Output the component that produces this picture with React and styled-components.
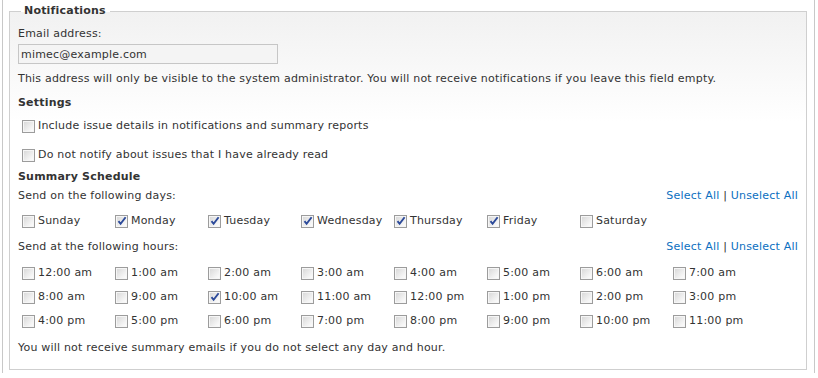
import React, {useState} from 'react';
import styled, {createGlobalStyle} from 'styled-components';

const Global = createGlobalStyle`
    html, body {
        margin: 0;
        padding: 0;
        background: #fff;
    }
    body {
        font-family: 'DejaVu Sans', Verdana, sans-serif;
        font-size: 11px;
        letter-spacing: 0.2px;
        color: #333;
    }
`

const Page = styled.div`
    width: 813px;
    height: 373px;
    margin-left: 2px;
    border-left: 1px solid #c8c8c8;
    border-right: 1px solid #c8c8c8;
    padding: 3px 7px 0 6px;
    box-sizing: border-box;
`

const Fieldset = styled.fieldset`
    margin: 0;
    padding: 0 8px 13px 8px;
    border: 1px solid #cfcfcf;
    background: linear-gradient(#f1f1f1, #ffffff 110px);
    min-width: 0;
`

const Legend = styled.legend`
    margin-left: 3px;
    padding: 0 4px 0 3px;
    font-weight: bold;
    line-height: 16px;
    color: #333;
`

const Line = styled.div`
    line-height: 16px;
    margin-top: ${props => props.$top || 0}px;
`

const Heading = styled(Line)`
    font-weight: bold;
`

const Input = styled.input`
    display: block;
    margin: 2px 0 0 0;
    width: 260px;
    height: 20px;
    padding: 0 2px;
    box-sizing: border-box;
    border: 1px solid #c6c6c6;
    background: #f4f4f4;
    font-family: inherit;
    font-size: 11px;
    letter-spacing: 0.2px;
    color: #333;
    outline: none;
`

const Bar = styled.div`
    display: flex;
    justify-content: space-between;
    line-height: 16px;
    margin-top: ${props => props.$top || 0}px;
`

const Links = styled.span`
    color: #333;
`

const Link = styled.a`
    color: #0b6fbf;
    text-decoration: none;
    cursor: pointer;
`

const Grid = styled.div`
    display: grid;
    grid-template-columns: repeat(${props => props.$cols}, 93px);
    row-gap: 8px;
    margin-top: ${props => props.$top || 0}px;
`

const Option = styled.label`
    display: flex;
    align-items: center;
    height: 16px;
    line-height: 16px;
    white-space: nowrap;
    margin-top: ${props => props.$top || 0}px;
    cursor: pointer;
`

const Box = styled.span`
    flex: none;
    position: relative;
    width: 13px;
    height: 13px;
    margin: 0 3px 0 4px;
    box-sizing: border-box;
    border: 1px solid #9c9c9c;
    background: linear-gradient(135deg, #d6d6d6, #f4f4f4 70%, #ffffff);
    box-shadow: inset 0 0 0 1px #f6f6f6;
    svg {
        position: absolute;
        left: 1px;
        top: 0px;
    }
`

const Check = ({checked, onClick}) => (
    <Box onClick={onClick}>
        {checked && (
            <svg width="10" height="10" viewBox="0 0 10 10">
                <path d="M1.5 5.2 L3.6 7.8 L8.6 1.2" fill="none" stroke="#2c4a9a" strokeWidth="1.9" />
            </svg>
        )}
    </Box>
)

const Toggle = ({label, checked, onToggle, top}) => (
    <Option $top={top} onClick={onToggle}>
        <Check checked={checked} />
        {label}
    </Option>
)

const days = ['Sunday', 'Monday', 'Tuesday', 'Wednesday', 'Thursday', 'Friday', 'Saturday'];
const hours = [];
for (let i = 0; i < 24; i++) {
    const h = i % 12 === 0 ? 12 : i % 12;
    hours.push(`${h}:00 ${i < 12 ? 'am' : 'pm'}`);
}

const App = () => {
    const [settings, setSettings] = useState([false, false]);
    const [daySel, setDaySel] = useState([false, true, true, true, true, true, false]);
    const [hourSel, setHourSel] = useState(hours.map((h, i) => i === 10));

    const flip = (list, set, i) => set(list.map((v, j) => j === i ? !v : v));

    return <>
        <Global />
        <Page>
            <Fieldset>
                <Legend>Notifications</Legend>
                <Line $top={7}>Email address:</Line>
                <Input defaultValue="mimec@example.com" />
                <Line $top={7}>This address will only be visible to the system administrator. You will not receive notifications if you leave this field empty.</Line>
                <Heading $top={8}>Settings</Heading>
                <Toggle top={7} label="Include issue details in notifications and summary reports"
                    checked={settings[0]} onToggle={() => flip(settings, setSettings, 0)} />
                <Toggle top={13} label="Do not notify about issues that I have already read"
                    checked={settings[1]} onToggle={() => flip(settings, setSettings, 1)} />
                <Heading $top={6}>Summary Schedule</Heading>
                <Bar $top={3}>
                    <span>Send on the following days:</span>
                    <Links>
                        <Link onClick={() => setDaySel(days.map(() => true))}>Select All</Link> | <Link onClick={() => setDaySel(days.map(() => false))}>Unselect All</Link>
                    </Links>
                </Bar>
                <Grid $cols={7} $top={9}>
                    {days.map((d, i) => (
                        <Toggle key={d} label={d} checked={daySel[i]} onToggle={() => flip(daySel, setDaySel, i)} />
                    ))}
                </Grid>
                <Bar $top={10}>
                    <span>Send at the following hours:</span>
                    <Links>
                        <Link onClick={() => setHourSel(hours.map(() => true))}>Select All</Link> | <Link onClick={() => setHourSel(hours.map(() => false))}>Unselect All</Link>
                    </Links>
                </Bar>
                <Grid $cols={8} $top={10}>
                    {hours.map((h, i) => (
                        <Toggle key={h} label={h} checked={hourSel[i]} onToggle={() => flip(hourSel, setHourSel, i)} />
                    ))}
                </Grid>
                <Line $top={11}>You will not receive summary emails if you do not select any day and hour.</Line>
            </Fieldset>
        </Page>
    </>
}

export default App;
